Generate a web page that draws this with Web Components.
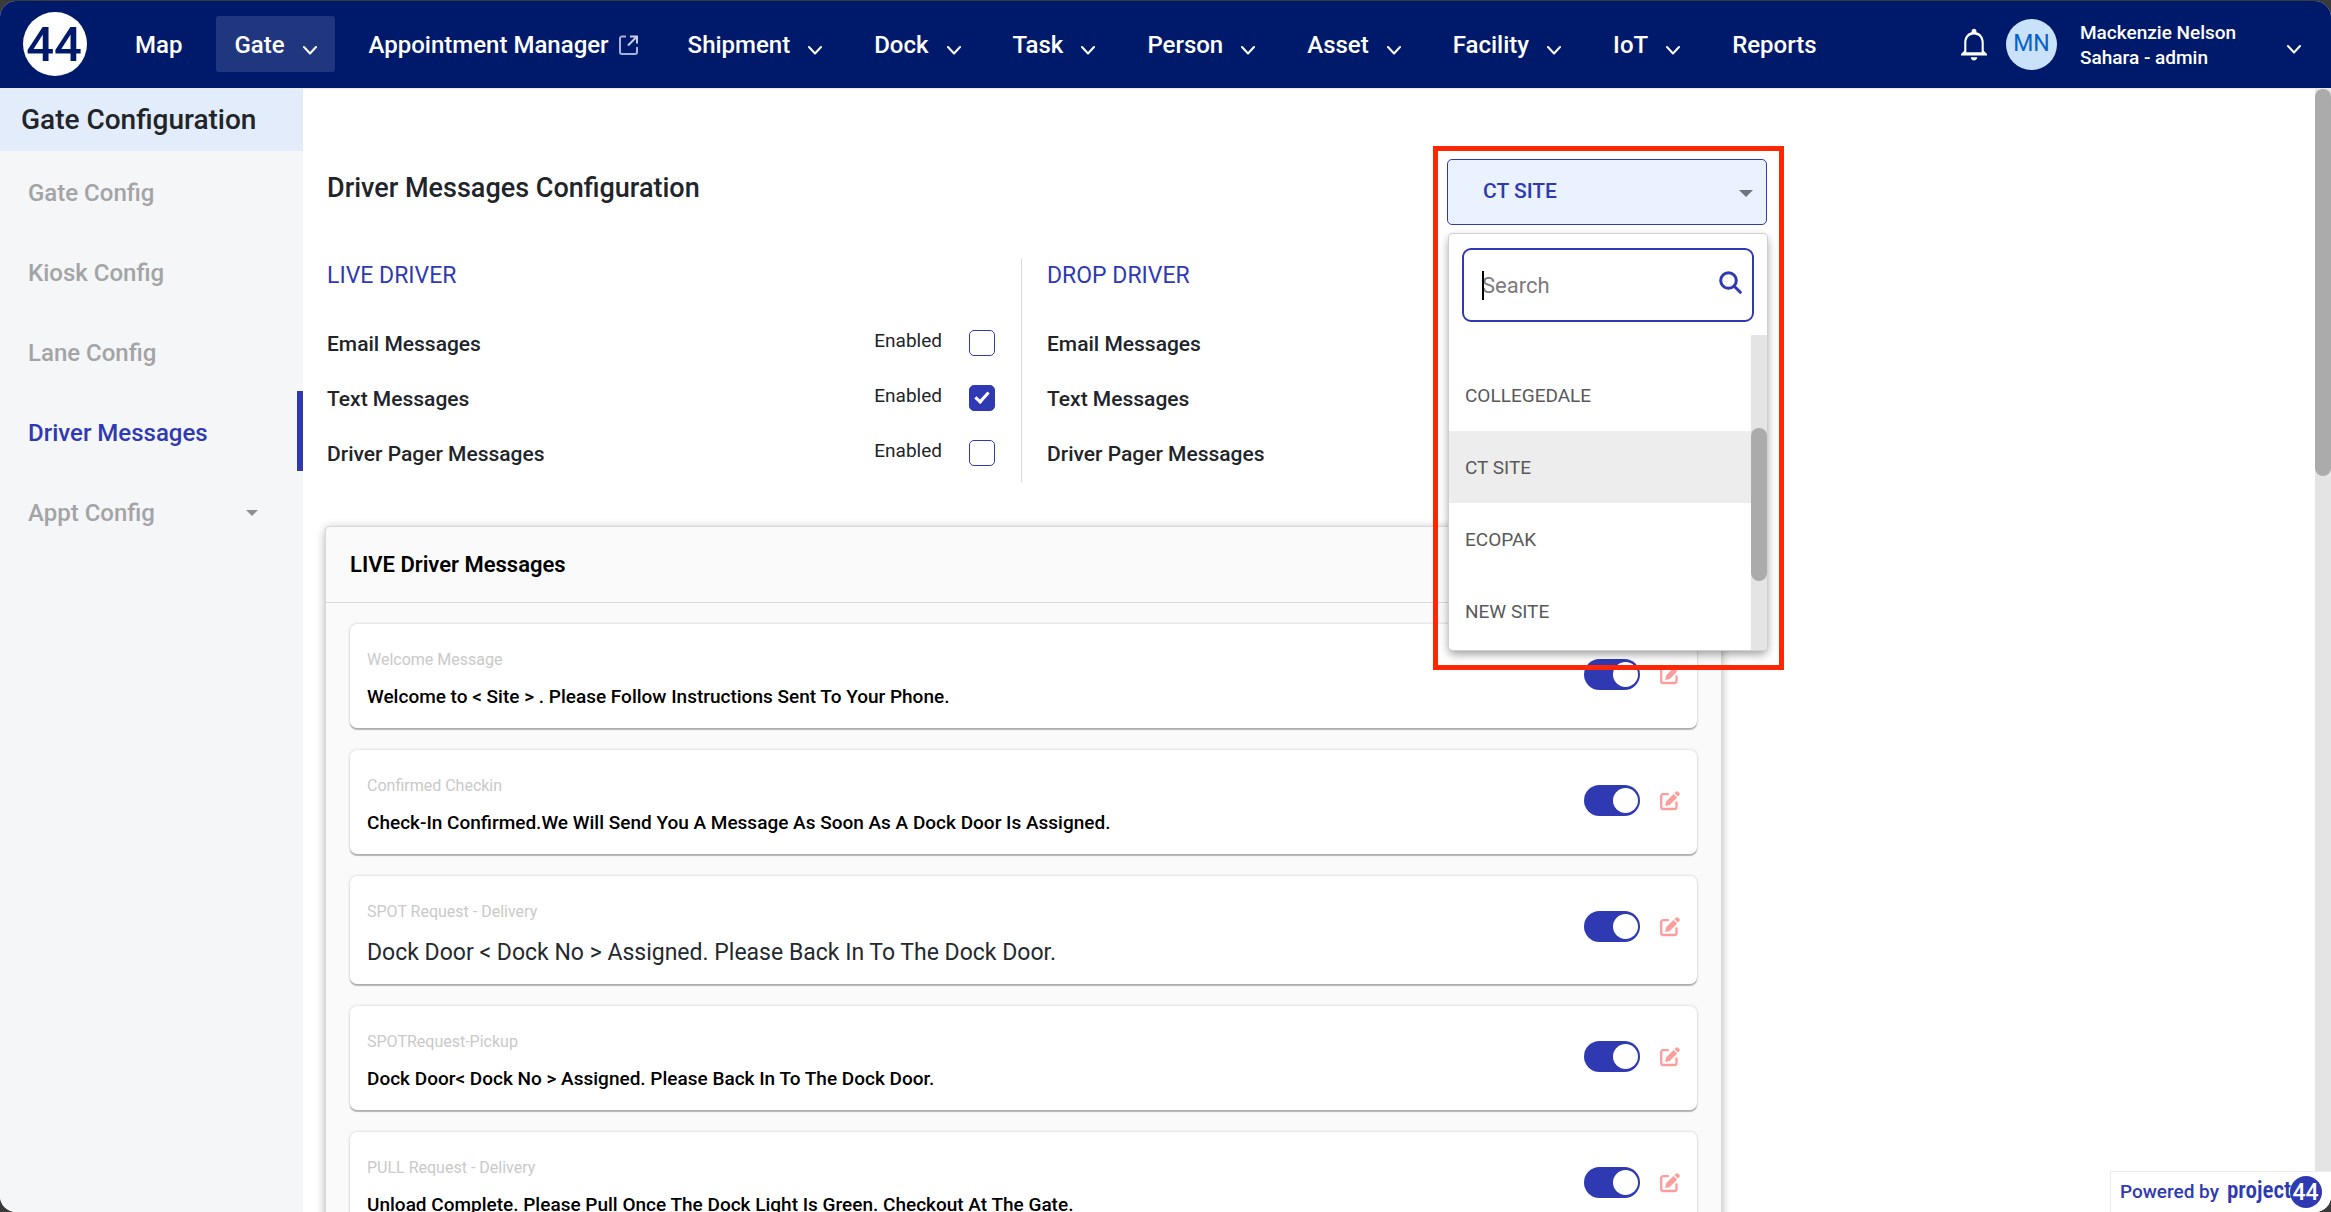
<!DOCTYPE html>
<html lang="en">
<head>
<meta charset="utf-8">
<title>Gate Configuration</title>
<style>
  html, body { margin: 0; height: 100%; background: #3a3a3a; }
  body {
    font-family: Roboto, "Liberation Sans", sans-serif;
    color: #212529;
    --navy: #001a6b;
    --blue: #2f3ab2;
    overflow: hidden;
  }
</style>
</head>
<body>
<yard-app>
  <top-nav slot="header">
    <nav-item>Map</nav-item>
    <nav-item menu active>Gate</nav-item>
    <nav-item external>Appointment Manager</nav-item>
    <nav-item menu>Shipment</nav-item>
    <nav-item menu>Dock</nav-item>
    <nav-item menu>Task</nav-item>
    <nav-item menu>Person</nav-item>
    <nav-item menu>Asset</nav-item>
    <nav-item menu>Facility</nav-item>
    <nav-item menu>IoT</nav-item>
    <nav-item>Reports</nav-item>
    <user-menu slot="user" initials="MN">
      <span>Mackenzie Nelson</span>
      <span slot="role">Sahara - admin</span>
    </user-menu>
  </top-nav>

  <side-nav slot="side">
    <span slot="title">Gate Configuration</span>
    <side-item>Gate Config</side-item>
    <side-item>Kiosk Config</side-item>
    <side-item>Lane Config</side-item>
    <side-item active>Driver Messages</side-item>
    <side-item expandable>Appt Config</side-item>
  </side-nav>

  <page-heading>
    Driver Messages Configuration
    <site-select slot="action" value="CT SITE">
      <site-option>COLLEGEDALE</site-option>
      <site-option selected>CT SITE</site-option>
      <site-option>ECOPAK</site-option>
      <site-option>NEW SITE</site-option>
    </site-select>
  </page-heading>

  <driver-settings>
    <driver-column slot="live" heading="LIVE DRIVER">
      <setting-row control label="Email Messages"></setting-row>
      <setting-row control checked label="Text Messages"></setting-row>
      <setting-row control label="Driver Pager Messages"></setting-row>
    </driver-column>
    <driver-column slot="drop" heading="DROP DRIVER">
      <setting-row label="Email Messages"></setting-row>
      <setting-row label="Text Messages"></setting-row>
      <setting-row label="Driver Pager Messages"></setting-row>
    </driver-column>
  </driver-settings>

  <message-panel heading="LIVE Driver Messages">
    <message-card label="Welcome Message">Welcome to &lt; Site &gt; . Please Follow Instructions Sent To Your Phone.</message-card>
    <message-card label="Confirmed Checkin">Check-In Confirmed.We Will Send You A Message As Soon As A Dock Door Is Assigned.</message-card>
    <message-card large label="SPOT Request - Delivery">Dock Door &lt; Dock No &gt; Assigned. Please Back In To The Dock Door.</message-card>
    <message-card label="SPOTRequest-Pickup">Dock Door&lt; Dock No &gt; Assigned. Please Back In To The Dock Door.</message-card>
    <message-card label="PULL Request - Delivery">Unload Complete. Please Pull Once The Dock Light Is Green. Checkout At The Gate.</message-card>
  </message-panel>

  <powered-badge slot="badge">Powered by</powered-badge>
</yard-app>

<script>
const base = '*, ::before, ::after { box-sizing: border-box } button, input, select { font-family: inherit } a { color: inherit; text-decoration: none }';

const chevron = '<svg class="chevron" width="14" height="9" viewBox="0 0 14 9" fill="none" stroke="#fff" stroke-width="2" stroke-linecap="round" stroke-linejoin="round" aria-hidden="true"><path d="M1 1l6 6.5L13 1"/></svg>';

function define(name, css, markup) {
  customElements.define(name, class extends HTMLElement {
    connectedCallback() {
      if (this.shadowRoot) return;
      const html = typeof markup === 'function' ? markup(this) : markup;
      this.attachShadow({ mode: 'open' }).innerHTML = `<style>${base}${css}</style>${html}`;
    }
  });
}

/* Window frame: header, sidebar, scrolling content */
define('yard-app', `
  :host { display: flex; flex-direction: column; height: calc(100vh - 1px); margin-top: 1px; position: relative;
          background: #fff; border-radius: 16px; overflow: hidden; }
  .body { flex: 1; display: flex; min-height: 0; }
  main { flex: 1; min-width: 0; overflow: hidden; padding: 70px 24px 0; }
  .scroll { flex: none; width: 16px; background: #e4e4e4; }
  .thumb { height: 34.5%; background: #ababab; border-radius: 8px; }
`, `
  <slot name="header"></slot>
  <div class="body">
    <slot name="side"></slot>
    <main><slot></slot></main>
    <div class="scroll"><div class="thumb"></div></div>
  </div>
  <slot name="badge"></slot>
`);

define('top-nav', `
  :host { display: block; flex: none; }
  header { display: flex; align-items: center; height: 88px; padding: 0 30px 1px 23px;
           background: var(--navy); border-bottom: 1px solid #e8e8ee; }
  .logo { flex: none; margin-right: 30px; }
  .logo svg { display: block; }
  nav { flex: 1; display: flex; gap: 16px; }
`, `
  <header>
    <a class="logo" href="#" aria-label="Home">
      <svg width="64" height="64" viewBox="0 0 64 64"><circle cx="32" cy="32" r="32" fill="#fff"/>
        <text x="31" y="49" text-anchor="middle" font-family="Roboto, sans-serif" font-weight="500" font-size="49" fill="#001a6b">44</text></svg>
    </a>
    <nav><slot></slot></nav>
    <slot name="user"></slot>
  </header>
`);

define('nav-item', `
  :host { display: block; }
  a { display: flex; align-items: center; gap: 18px; height: 56px; padding: 2px 18px 0; border-radius: 3px;
      color: #fff; font-size: 24px; font-weight: 500; white-space: nowrap; }
  :host([active]) a { background: #20367e; }
  :host([external]) a { gap: 10px; padding-right: 16px; }
  .chevron { margin-top: 10px; }
`, el => `
  <a href="#"><slot></slot>${el.hasAttribute('menu') ? chevron : ''}${el.hasAttribute('external') ? `
    <svg width="19" height="20" viewBox="0 0 19 20" fill="none" stroke="#a9b0d8" stroke-width="2" aria-hidden="true">
      <path d="M7 1.500H3A2 2 0 0 0 1 3.500V17a2 2 0 0 0 2 2h13a2 2 0 0 0 2-2v-5"/><path d="M11 1.500h7v7M17.500 2L9 10.500" stroke="#c9cdea"/>
    </svg>` : ''}</a>
`);

define('user-menu', `
  :host { display: flex; align-items: center; color: #fff; }
  button { display: flex; align-items: center; padding: 0; border: 0; background: none; color: inherit; text-align: left; }
  .bell { margin-right: 19px; }
  .avatar { display: grid; place-items: center; width: 51px; height: 51px; margin-right: 23px; padding-bottom: 2px;
            border-radius: 50%; background: #cae1fa; color: #0561c9; font-size: 23px; }
  .who { display: flex; flex-direction: column; width: 207px; padding-top: 2px; font-size: 19px; font-weight: 500; line-height: 25px; }
  .chevron { margin-top: 11px; }
`, el => `
  <button class="bell" aria-label="Notifications">
    <svg width="26" height="33" viewBox="4 2.200 16 20" fill="#fff"><path d="M12 22c1.100 0 2-.9 2-2h-4c0 1.100.9 2 2 2zm6-6v-5c0-3.070-1.630-5.640-4.500-6.320V4c0-.83-.67-1.500-1.500-1.500s-1.500.67-1.500 1.500v.68C7.640 5.360 6 7.920 6 11v5l-2 2v1h16v-1l-2-2zm-1.300 1H7.300v-6c0-2.800 1.900-5 4.700-5s4.700 2.200 4.700 5v6z"/></svg>
  </button>
  <button class="account">
    <span class="avatar">${el.getAttribute('initials')}</span>
    <span class="who"><slot></slot><slot name="role"></slot></span>
    ${chevron}
  </button>
`);

define('side-nav', `
  :host { display: block; flex: none; width: 303px; background: #f5f6f8; }
  h1 { margin: 0; padding: 0 21px; background: #e2ecfa; color: #212529; font-size: 28px; font-weight: 500; line-height: 62px; }
`, `<h1><slot name="title"></slot></h1><nav><slot></slot></nav>`);

define('side-item', `
  :host { display: block; }
  a { display: flex; align-items: center; justify-content: space-between; height: 80px; padding: 3px 39px 0 28px;
      border-right: 6px solid transparent; color: #a3a4a6; font-size: 24px; font-weight: 500; }
  :host([active]) a { color: var(--blue); border-color: var(--blue); }
`, el => `
  <a href="#"><slot></slot>${el.hasAttribute('expandable') ? '<svg width="12" height="6" viewBox="0 0 12 6" aria-hidden="true"><path d="M0 0h12L6 6z" fill="#8f9092"/></svg>' : ''}</a>
`);

define('page-heading', `
  :host { display: flex; justify-content: space-between; align-items: flex-start; max-width: 1440px; }
  h2 { margin: 0; font-size: 27px; font-weight: 500; line-height: 58px; }
`, `<h2><slot></slot></h2><slot name="action"></slot>`);

/* Site drop-down, shown open with its search box and option list */
define('site-select', `
  :host { display: block; position: relative; z-index: 2; width: 320px; }
  .box { position: relative; }
  select { display: block; appearance: none; width: 100%; height: 66px; padding: 0 35px 2px; border: 1px solid var(--blue);
           border-radius: 5px; background: #e9f2fe; color: var(--blue); font-size: 21px; font-weight: 500; outline: 0; }
  .arrow { position: absolute; right: 14px; top: 31px; }
  .popup { position: absolute; top: calc(100% + 9px); left: 2px; right: 0; overflow: hidden; border-radius: 4px;
           background: #fff; box-shadow: 0 0 0 1px #d0d0d0, 0 4px 10px rgba(0,0,0,.4); }
  .search { position: relative; margin: 14px 13px 13px; }
  input { display: block; width: 100%; height: 74px; padding: 0 60px 0 18px; border: 2px solid var(--blue); border-radius: 9px;
          font-size: 22px; outline: 0; caret-color: transparent; }
  input::placeholder { color: #7b7b7b; opacity: 1; }
  .caret { position: absolute; left: 20px; top: 23px; width: 2px; height: 29px; background: #000; }
  .glass { position: absolute; right: 12px; top: 23px; }
  .list { display: flex; height: 315px; }
  .options { flex: 1; padding-top: 24px; overflow: hidden; }
  .track { width: 16px; padding-top: 93px; background: #e4e4e4; }
  .thumb { height: 153px; border-radius: 8px; background: #ababab; }
  .frame { position: absolute; left: -14px; right: -17px; top: -13px; bottom: -445px; border: 5px solid #ff2600; pointer-events: none; }
`, el => `
  <div class="box">
    <select aria-label="Site"><option>${el.getAttribute('value')}</option></select>
    <svg class="arrow" width="14" height="7" viewBox="0 0 14 7" aria-hidden="true"><path d="M0 0h14L7 7z" fill="#6f757d"/></svg>
  </div>
  <div class="popup">
    <div class="search">
      <input type="text" placeholder="Search" aria-label="Search sites"><span class="caret"></span>
      <svg class="glass" width="23" height="23" viewBox="0 0 23 23" fill="none" stroke="#2f3ab2" stroke-linecap="round" aria-hidden="true"><circle cx="9.500" cy="9.500" r="7.800" stroke-width="3"/><path d="M15.500 15.500l5.800 5.800" stroke-width="3"/></svg>
    </div>
    <div class="list">
      <div class="options" role="listbox" aria-label="Sites"><slot></slot></div>
      <div class="track"><div class="thumb"></div></div>
    </div>
  </div>
  <div class="frame"></div>
`);

define('site-option', `
  :host { display: block; }
  button { display: block; width: 100%; height: 72px; padding: 1px 16px 0; border: 0; background: #fff; color: #595959;
           font-size: 19px; text-align: left; }
  :host([selected]) button { background: #ededed; }
`, `<button role="option"><slot></slot></button>`);

define('driver-settings', `
  :host { display: grid; grid-template-columns: 1fr 1fr; max-width: 1390px; margin-top: 34px; }
  .live { padding-right: 26px; border-right: 1px solid #d9dbdd; padding-bottom: 2px; }
  .drop { padding-left: 25px; }
`, `<div class="live"><slot name="live"></slot></div><div class="drop"><slot name="drop"></slot></div>`);

define('driver-column', `
  :host { display: block; }
  h3 { margin: 0 0 22px; color: var(--blue); font-size: 23px; font-weight: 400; line-height: 34px; }
`, el => `<h3>${el.getAttribute('heading')}</h3><slot></slot>`);

define('setting-row', `
  :host { display: flex; align-items: center; justify-content: space-between; height: 55px; }
  .name { padding-top: 3px; font-size: 21px; font-weight: 500; }
  label { display: flex; align-items: center; gap: 27px; font-size: 19px; }
  label span { padding-bottom: 4px; }
  input { appearance: none; display: grid; place-items: center; width: 26px; height: 26px; margin: 0;
          border: 1px solid var(--blue); border-radius: 5px; background: #fff; }
  input:checked { background: var(--blue); }
  input:checked::before { content: ""; width: 8px; height: 14px; margin-bottom: 4px; border: solid #fff; border-width: 0 3px 3px 0; rotate: 42deg; }
`, el => `
  <span class="name">${el.getAttribute('label')}</span>
  ${el.hasAttribute('control') ? `<label for="enabled"><span>Enabled</span><input id="enabled" type="checkbox"${el.hasAttribute('checked') ? ' checked' : ''}></label>` : ''}
`);

define('message-panel', `
  :host { display: block; max-width: 1395px; margin: 44px 0 0 -2px; border: 1px solid #d8d8d8; border-radius: 5px;
          background: #fafafa; box-shadow: 0 2px 10px rgba(0,0,0,.3); }
  h3 { margin: 0; padding: 0 24px; border-bottom: 1px solid #dadada; color: #000; font-size: 22px; font-weight: 600; line-height: 75px; }
  .cards { display: flex; flex-direction: column; gap: 22px; padding: 21px 24px; }
`, el => `<h3>${el.getAttribute('heading')}</h3><div class="cards"><slot></slot></div>`);

define('message-card', `
  :host { display: flex; align-items: flex-start; gap: 20px; padding: 24px 17px 16px; border-radius: 7px; background: #fff;
          box-shadow: 0 2px 1px rgba(0,0,0,.25), 0 0 3px rgba(0,0,0,.2); }
  .text { flex: 1; min-width: 0; }
  .label { color: #c9c9c9; font-size: 16px; line-height: 24px; }
  .message { margin-top: 10px; color: #000; font-size: 19px; font-weight: 500; line-height: 30px; }
  :host([large]) .message { margin-top: 14px; color: #24292e; font-size: 23px; font-weight: 400; }
  input { appearance: none; width: 56px; height: 31px; margin: 0; padding: 3px 2px; border-radius: 16px; background: var(--blue);
          display: flex; justify-content: flex-end; }
  input::before { content: ""; width: 25px; height: 25px; border-radius: 50%; background: #fff; }
  button { display: block; padding: 0; border: 0; background: none; }
  svg { display: block; }
  .controls { display: flex; align-items: center; gap: 20px; padding-top: 11px; }
`, el => `
  <div class="text">
    <div class="label">${el.getAttribute('label')}</div>
    <div class="message"><slot></slot></div>
  </div>
  <div class="controls">
    <input type="checkbox" role="switch" checked aria-label="${el.getAttribute('label')}">
    <button aria-label="Edit">
      <svg width="20" height="20" viewBox="0 0 20 20"><path d="M8 3.200H3.200A2 2 0 0 0 1.200 5.200V16a2 2 0 0 0 2 2H14.500a2 2 0 0 0 2-2V11.500" fill="none" stroke="#fb9e9b" stroke-width="2.300" stroke-linecap="round"/><path d="M5.200 14.900L6.200 10.300L13.500 3L17.200 6.600L9.800 13.900zM14.500 2.100L15.700 .9a2 2 0 0 1 2.800 0l.6.6a2 2 0 0 1 0 2.800L18 5.600z" fill="#fb9e9b"/></svg>
    </button>
  </div>
`);

define('powered-badge', `
  :host { position: absolute; right: 0; bottom: 0; z-index: 3; display: flex; align-items: center; height: 39px; padding: 0 9px 1px;
          border: 1px solid #ececf0; border-right: 0; border-bottom: 0; background: #fff; color: var(--blue); font-size: 19px; font-weight: 500; }
  .brand { margin: 0 0 2px 8px; font: 600 23px/30px "Roboto Condensed", "Open Sans Condensed", "Liberation Sans", sans-serif; }
  svg { display: block; margin-left: -1px; }
`, `
  <slot></slot><span class="brand">project</span>
  <svg width="32" height="32" viewBox="0 0 32 32"><circle cx="16" cy="16" r="16" fill="#2f3ab2"/>
    <text x="15.500" y="24" text-anchor="middle" font-family="Roboto, sans-serif" font-weight="500" font-size="23" fill="#fff">44</text></svg>
`);
</script>
</body>
</html>
